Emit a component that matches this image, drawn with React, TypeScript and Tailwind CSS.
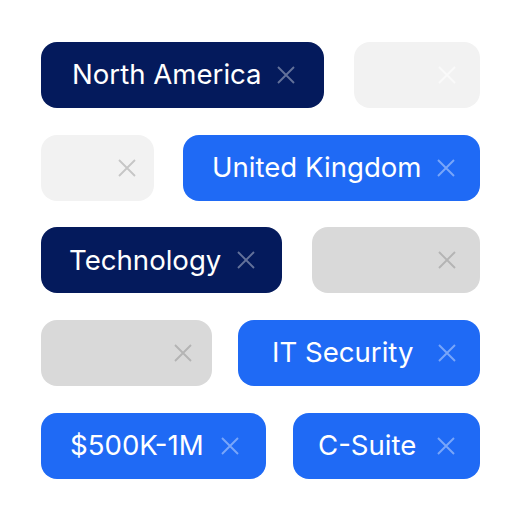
import React from "react";

type Chip = {
  label?: string;
  w: string;
  pl?: string;
  pr: string;
  bg: string;
  x: string;
};

function XIcon({ className }: { className: string }) {
  return (
    <svg viewBox="0 0 18 18" className={`w-[18px] h-[18px] shrink-0 ${className}`} fill="none">
      <path d="M1 1L17 17M17 1L1 17" stroke="currentColor" strokeWidth="1.9" />
    </svg>
  );
}

const rows: Chip[][] = [
  [
    { label: "North America", w: "w-[283px]", pl: "pl-[31px]", pr: "pr-[29px]", bg: "bg-[#041a5c]", x: "text-[#63719a]" },
    { w: "w-[126px]", pr: "pr-[24px]", bg: "bg-[#f2f2f2]", x: "text-[#fafafa]" },
  ],
  [
    { w: "w-[113px]", pr: "pr-[18px]", bg: "bg-[#f2f2f2]", x: "text-[#c6c6c6]" },
    { label: "United Kingdom", w: "w-[297px]", pl: "pl-[29px]", pr: "pr-[25px]", bg: "bg-[#1f6af5]", x: "text-[#79a6f9]" },
  ],
  [
    { label: "Technology", w: "w-[241px]", pl: "pl-[28px]", pr: "pr-[27px]", bg: "bg-[#041a5c]", x: "text-[#63719a]" },
    { w: "w-[168px]", pr: "pr-[24px]", bg: "bg-[#d9d9d9]", x: "text-[#b4b4b4]" },
  ],
  [
    { w: "w-[171px]", pr: "pr-[20px]", bg: "bg-[#d9d9d9]", x: "text-[#b4b4b4]" },
    { label: "IT Security", w: "w-[242px]", pl: "pl-[34px]", pr: "pr-[24px]", bg: "bg-[#1f6af5]", x: "text-[#79a6f9]" },
  ],
  [
    { label: "$500K-1M", w: "w-[225px]", pl: "pl-[29px]", pr: "pr-[27px]", bg: "bg-[#1f6af5]", x: "text-[#79a6f9]" },
    { label: "C-Suite", w: "w-[187px]", pl: "pl-[25px]", pr: "pr-[25px]", bg: "bg-[#1f6af5]", x: "text-[#79a6f9]" },
  ],
];

export default function App() {
  return (
    <div
      className="w-[521px] h-[521px] bg-white pt-[42px] px-[41px] flex flex-col gap-[26.7px]"
      style={{ fontFamily: "Inter, 'Noto Sans', sans-serif" }}
    >
      {rows.map((row, i) => (
        <div key={i} className="flex justify-between">
          {row.map((chip, j) => (
            <div
              key={j}
              className={`h-[66px] rounded-[16px] flex items-center ${chip.label ? "justify-between" : "justify-end"} ${chip.w} ${chip.pl ?? ""} ${chip.pr} ${chip.bg}`}
            >
              {chip.label && (
                <span className="text-white text-[27.6px] leading-none">{chip.label}</span>
              )}
              <XIcon className={chip.x} />
            </div>
          ))}
        </div>
      ))}
    </div>
  );
}
